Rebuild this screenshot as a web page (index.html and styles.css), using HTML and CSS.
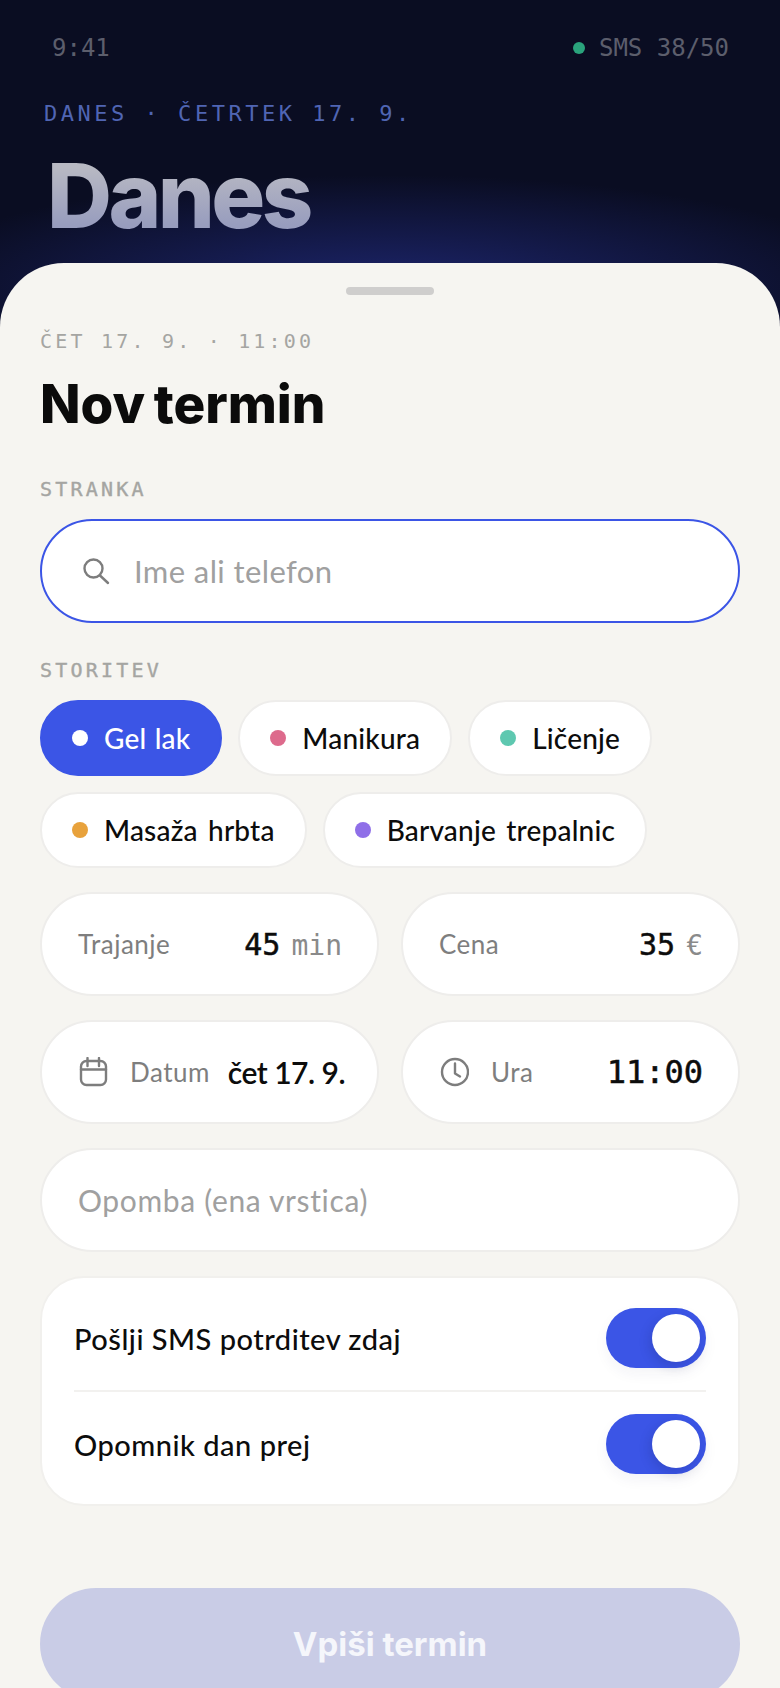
FILE: index.html
```html
<!DOCTYPE html>
<html lang="sl">

<head>
    <meta charset="UTF-8">
    <meta name="viewport" content="width=device-width, initial-scale=1.0">
    <title>Nov termin</title>
    <link rel="stylesheet" href="styles.css">
</head>

<body>
    <div class="app">
        <header class="top">
            <div class="status">
                <span>9:41</span>
                <span class="sms"><i class="sms-dot"></i>SMS 38/50</span>
            </div>
            <p class="eyebrow">DANES · ČETRTEK 17. 9.</p>
            <h1 class="page-title">Danes</h1>
        </header>

        <main class="sheet">
            <div class="grabber"></div>
            <p class="sheet-date">ČET 17. 9. · 11:00</p>
            <h2 class="sheet-title">Nov termin</h2>

            <p class="label label-first">STRANKA</p>
            <div class="search">
                <svg class="icon" width="30" height="30" viewBox="0 0 30 30">
                    <circle cx="13.5" cy="12.5" r="9" />
                    <path d="M20 19.500l8 7.500" />
                </svg>
                <span class="placeholder">Ime ali telefon</span>
            </div>

            <p class="label">STORITEV</p>
            <div class="chips">
                <div class="chip chip-active"><i class="dot dot-white"></i>Gel lak</div>
                <div class="chip"><i class="dot dot-pink"></i>Manikura</div>
                <div class="chip"><i class="dot dot-teal"></i>Ličenje</div>
                <div class="chip"><i class="dot dot-orange"></i>Masaža hrbta</div>
                <div class="chip"><i class="dot dot-purple"></i>Barvanje trepalnic</div>
            </div>

            <div class="fields">
                <div class="field">
                    <span class="field-label">Trajanje</span>
                    <span class="value">45<small>min</small></span>
                </div>
                <div class="field">
                    <span class="field-label">Cena</span>
                    <span class="value">35<small>€</small></span>
                </div>
                <div class="field">
                    <svg class="icon" width="30" height="30" viewBox="0 0 30 30">
                        <rect x="3" y="4" width="25" height="24" rx="5.5" />
                        <path d="M9.500 1v8M21 1v8M3 12.500h25" />
                    </svg>
                    <span class="field-label field-label-icon">Datum</span>
                    <span class="value-text">čet 17. 9.</span>
                </div>
                <div class="field">
                    <svg class="icon" width="30" height="30" viewBox="0 0 30 30">
                        <circle cx="16" cy="15" r="13" />
                        <path d="M16 6.500v10l5 3" />
                    </svg>
                    <span class="field-label field-label-icon">Ura</span>
                    <span class="value value-time">11:00</span>
                </div>
                <div class="field field-wide">
                    <span class="placeholder placeholder-note">Opomba (ena vrstica)</span>
                </div>
            </div>

            <div class="settings">
                <div class="setting">
                    <span>Pošlji SMS potrditev zdaj</span>
                    <span class="toggle"><i class="knob"></i></span>
                </div>
                <div class="setting">
                    <span>Opomnik dan prej</span>
                    <span class="toggle"><i class="knob"></i></span>
                </div>
            </div>

            <button class="submit" type="button">Vpiši termin</button>
        </main>
    </div>
</body>

</html>
```

FILE: styles.css
```css
* {
    box-sizing: border-box;
}

body {
    margin: 0;
    font-family: "Lato", "Noto Sans", sans-serif;
    color: #0c0c0c;
}

p, h1, h2 {
    margin: 0;
}

.app {
    width: 780px;
    height: 1688px;
    overflow: hidden;
    display: flex;
    flex-direction: column;
    background:
        radial-gradient(ellipse 500px 115px at 390px 290px, #1b2463 0%, #181f5a 25%, rgba(10, 13, 34, 0) 100%),
        #0a0d22;
}

.top {
    height: 263px;
    flex-shrink: 0;
    padding: 34px 51px 0 44px;
}

.status {
    display: flex;
    justify-content: space-between;
    padding-left: 8px;
    font-family: "DejaVu Sans Mono", "Liberation Mono", monospace;
    font-size: 24px;
    line-height: 28px;
    color: #5c5e6c;
}

.sms {
    display: flex;
    align-items: center;
    gap: 14px;
}

.sms-dot {
    width: 12px;
    height: 12px;
    border-radius: 50%;
    background: #2aa37c;
}

.eyebrow {
    margin-top: 38px;
    font-family: "DejaVu Sans Mono", "Liberation Mono", monospace;
    font-size: 22px;
    line-height: 28px;
    letter-spacing: 3.52px;
    color: #5065b3;
}

.page-title {
    margin-top: 20px;
    margin-left: 3px;
    font-family: "Inter", sans-serif;
    font-size: 90px;
    line-height: 96px;
    font-weight: 800;
    letter-spacing: -3.6px;
    background: linear-gradient(180deg, #b8b9c3 20%, #989dbe 80%);
    -webkit-background-clip: text;
    background-clip: text;
    color: transparent;
}

.sheet {
    flex: 1;
    padding: 24px 40px 0;
    background: #f6f5f1;
    border-radius: 64px 64px 0 0;
}

.grabber {
    width: 88px;
    height: 8px;
    margin: 0 auto;
    border-radius: 4px;
    background: #cfcecd;
}

.sheet-date, .label {
    font-family: "DejaVu Sans Mono", "Liberation Mono", monospace;
    font-size: 20px;
    letter-spacing: 3.2px;
    color: #a5a5a2;
}

.label {
    -webkit-text-stroke: 0.4px #a5a5a2;
}

.sheet-date {
    margin-top: 32px;
    line-height: 28px;
}

.sheet-title {
    margin-top: 19px;
    font-family: "Inter", sans-serif;
    font-size: 53px;
    line-height: 60px;
    font-weight: 800;
    word-spacing: -3px;
    color: #0b0b0b;
}

.label {
    margin: 34px 0 17px;
    line-height: 26px;
}

.label-first {
    margin: 42px 0 17px;
}

.search {
    display: flex;
    align-items: center;
    gap: 24px;
    height: 104px;
    padding: 0 38px;
    border: 2px solid #3b55e6;
    border-radius: 52px;
    background: #fff;
}

.icon {
    flex-shrink: 0;
    fill: none;
    stroke: #7d7d7d;
    stroke-width: 2.4;
    stroke-linecap: round;
    stroke-linejoin: round;
}

.placeholder {
    font-size: 31px;
    letter-spacing: 0.4px;
    color: #a0a0a0;
}

.placeholder-note {
    font-size: 30px;
    letter-spacing: 0.65px;
}

.chips {
    display: flex;
    flex-wrap: wrap;
    gap: 16px;
}

.chip {
    display: flex;
    align-items: center;
    gap: 16px;
    height: 76px;
    padding: 0 30px;
    border: 2px solid #eeedeb;
    border-radius: 38px;
    background: #fff;
    font-size: 28px;
    font-weight: 500;
    letter-spacing: 0.2px;
    word-spacing: 3px;
    white-space: nowrap;
}

.chip-active {
    border-color: #3b55e6;
    background: #3b55e6;
    color: #fff;
    word-spacing: 1px;
}

.dot {
    width: 16px;
    height: 16px;
    border-radius: 50%;
}

.dot-white { background: #fff; }
.dot-pink { background: #dd6a8c; }
.dot-teal { background: #5ec8b0; }
.dot-orange { background: #e8a23c; }
.dot-purple { background: #8f6fe8; }

.fields {
    display: grid;
    grid-template-columns: 1fr 1fr;
    gap: 24px 22px;
    margin-top: 24px;
}

.field {
    display: flex;
    align-items: center;
    height: 104px;
    padding: 0 36px;
    border: 2px solid #eeedeb;
    border-radius: 52px;
    background: #fff;
}

.field-wide {
    grid-column: 1 / 3;
}

.field-label {
    font-size: 26px;
    letter-spacing: 0.5px;
    color: #7e7e7e;
}

.field-label-icon {
    margin-left: 22px;
}

.value, .value-text {
    margin-left: auto;
    white-space: nowrap;
}

.value {
    margin-right: -1px;
    font-family: "DejaVu Sans Mono", "Liberation Mono", monospace;
    font-size: 30px;
    -webkit-text-stroke: 0.5px #0c0c0c;
}

.value small {
    margin-left: 11px;
    font-size: 28px;
    color: #8a8a8a;
    -webkit-text-stroke: 0;
}

.value-time {
    font-size: 32px;
}

.value-text {
    margin-right: -4px;
    font-size: 30px;
    font-weight: 600;
    letter-spacing: -0.5px;
}

.settings {
    margin-top: 24px;
    padding: 8px 32px;
    border: 2px solid #f1f0ed;
    border-radius: 44px;
    background: #fff;
}

.setting {
    display: flex;
    align-items: center;
    justify-content: space-between;
    padding: 22px 0;
    font-size: 29px;
    font-weight: 500;
    letter-spacing: 0.5px;
}

.setting + .setting {
    border-top: 2px solid #f2f1ef;
}

.toggle {
    display: flex;
    justify-content: flex-end;
    align-items: center;
    width: 100px;
    height: 60px;
    padding: 0 6px;
    border-radius: 30px;
    background: #3b55e6;
    box-shadow: 0 6px 14px rgba(30, 40, 90, 0.05);
}

.knob {
    width: 48px;
    height: 48px;
    border-radius: 50%;
    background: #fff;
    box-shadow: -2px 4px 12px rgba(20, 30, 90, 0.2);
}

.submit {
    display: block;
    width: 100%;
    height: 112px;
    margin-top: 82px;
    border: 0;
    border-radius: 56px;
    background: #c9cce6;
    font-family: "Inter", sans-serif;
    font-size: 33px;
    font-weight: 700;
    color: #f5f6fb;
}
```
